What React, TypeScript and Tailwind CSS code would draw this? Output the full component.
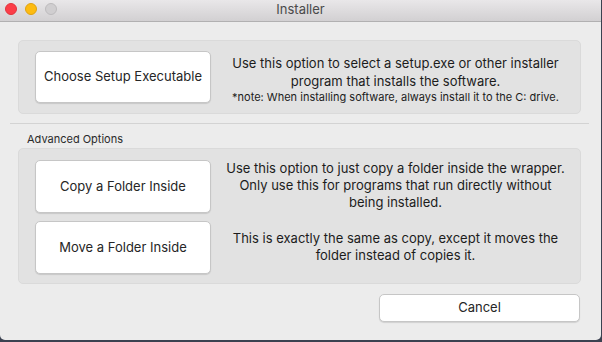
const font = { fontFamily: 'Inter, "Liberation Sans", Arial, sans-serif' };

const MacButton = ({ label, className }: { label: string; className: string }) => (
    <button
        className={`flex items-center justify-center rounded-[5px] border border-[#c6c6c6] bg-white text-[13px] text-[#262626] shadow-[0_1px_1px_rgba(0,0,0,0.12)] ${className}`}
    >
        {label}
    </button>
);

const App = () => {
    return (
        <div className="w-[602px] h-[342px] bg-[#3b4150]" style={font}>
            <div className="w-[601px] h-[340px] bg-[#ececec] rounded-b-[5px] overflow-hidden flex flex-col">
                {/* title bar */}
                <div className="relative h-[22px] shrink-0 bg-gradient-to-b from-[#e9e7e9] to-[#d2d0d2] border-b border-[#b1b0b1] flex items-center justify-center">
                    <div className="absolute left-[5px] top-[3px] flex gap-[8px]">
                        <span className="w-[12px] h-[12px] rounded-full bg-[#fc3d48] border border-[#e2333d]" />
                        <span className="w-[12px] h-[12px] rounded-full bg-[#fdbb11] border border-[#e0a210]" />
                        <span className="w-[12px] h-[12px] rounded-full bg-[#d0ced0] border border-[#bdbbbd]" />
                    </div>
                    <span className="text-[13px] text-[#4a4a4a] -mt-[1px]">Installer</span>
                </div>

                {/* main option */}
                <div className="ml-[18px] mr-[20px] mt-[18px] h-[74px] rounded-[5px] bg-[#e2e2e2] border border-[#dadada] flex items-center pl-[16px]">
                    <MacButton label="Choose Setup Executable" className="w-[176px] h-[52px]" />
                    <div className="flex-1 text-center text-[#1c1c1c] pt-[3px]">
                        <p className="text-[13px] leading-[18px]">Use this option to select a setup.exe or other installer</p>
                        <p className="text-[13px] leading-[18px]">program that installs the software.</p>
                        <p className="text-[11px] leading-[14px]">*note: When installing software, always install it to the C: drive.</p>
                    </div>
                </div>

                <div className="ml-[10px] mr-[12px] mt-[9px] h-px bg-[#d3d3d3]" />

                <p className="ml-[27px] mt-[9px] text-[11px] leading-[13px] text-[#2a2a2a]">Advanced Options</p>

                {/* advanced */}
                <div className="ml-[18px] mr-[20px] mt-[2px] h-[136px] rounded-[5px] bg-[#e2e2e2] border border-[#dadada] pl-[16px] pt-[11px] flex flex-col gap-[8px]">
                    <div className="flex items-center">
                        <MacButton label="Copy a Folder Inside" className="w-[176px] h-[53px]" />
                        <div className="flex-1 text-center text-[13px] leading-[17px] text-[#1c1c1c] pb-[2px]">
                            <p>Use this option to just copy a folder inside the wrapper.</p>
                            <p>Only use this for programs that run directly without</p>
                            <p>being installed.</p>
                        </div>
                    </div>
                    <div className="flex items-center">
                        <MacButton label="Move a Folder Inside" className="w-[176px] h-[53px]" />
                        <div className="flex-1 text-center text-[13px] leading-[17px] text-[#1c1c1c] pb-[2px]">
                            <p>This is exactly the same as copy, except it moves the</p>
                            <p>folder instead of copies it.</p>
                        </div>
                    </div>
                </div>

                <div className="flex justify-end mr-[21px] mt-[10px]">
                    <MacButton label="Cancel" className="w-[201px] h-[28px]" />
                </div>
            </div>
        </div>
    );
};

export default App;
